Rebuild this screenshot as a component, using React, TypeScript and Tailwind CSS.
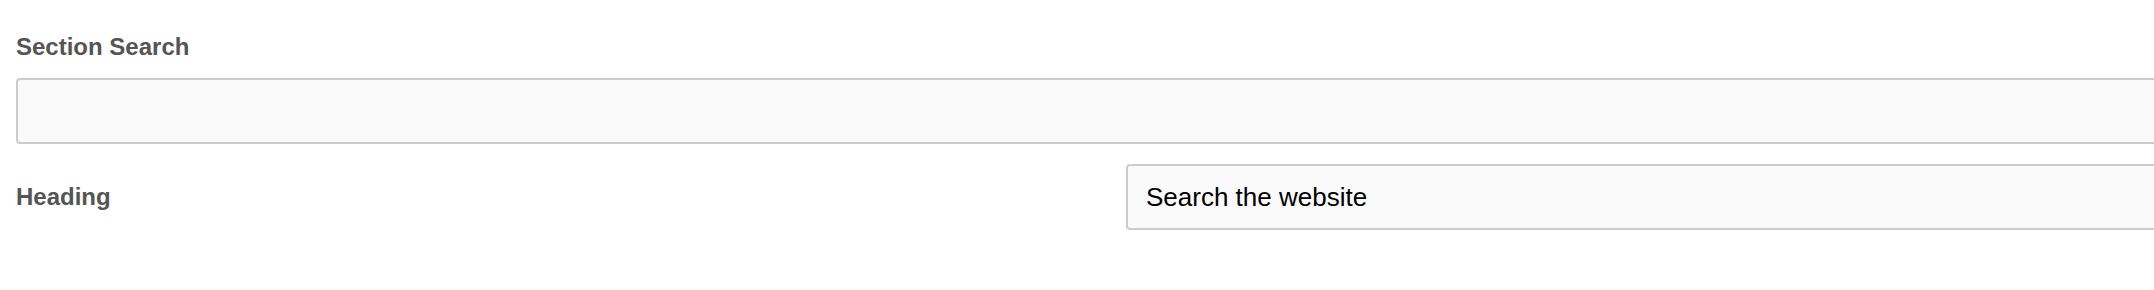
import React from "react";

const labelCls = "text-[24px] leading-[28px] font-bold text-[#555555]";
const inputCls =
  "block w-full h-[66px] rounded-[4px] border-2 border-[#cccccc] bg-[#fafafa] px-[18px] text-[26px] text-black outline-none";

export default function App() {
  return (
    <div className="w-full h-[290px] overflow-hidden bg-white font-['Liberation_Sans',Arial,sans-serif]">
      <div className="w-[2220px] ml-4 pt-[33px]">
        {/* Section search field */}
        <label className={`block mb-[17px] ${labelCls}`}>Section Search</label>
        <input className={inputCls} defaultValue="" />

        {/* Heading row */}
        <div className="grid grid-cols-2 items-center mt-5">
          <label className={labelCls}>Heading</label>
          <input className={inputCls} defaultValue="Search the website" />
        </div>
      </div>
    </div>
  );
}
